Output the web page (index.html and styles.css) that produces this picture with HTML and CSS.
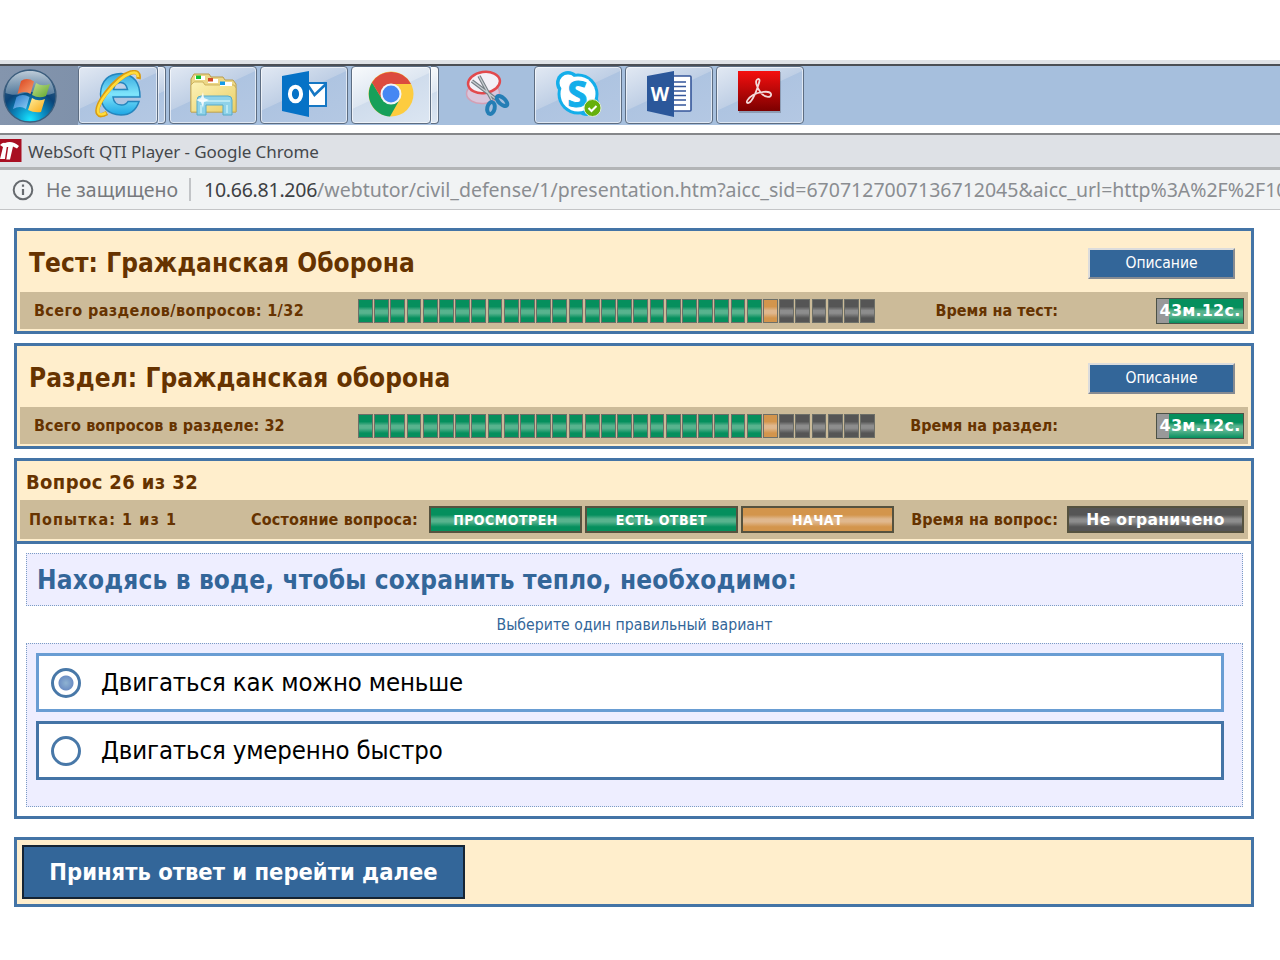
FILE: index.html
```html
<!DOCTYPE html>
<html lang="ru">
<head>
<meta charset="utf-8">
<title>WebSoft QTI Player</title>
<link rel="stylesheet" href="styles.css">
</head>
<body>
<header class="taskbar">
  <div class="start">
    <svg width="56" height="56" viewBox="0 0 56 56">
      <defs>
        <radialGradient id="orb" cx=".5" cy=".95" r=".9"><stop offset="0" stop-color="#18e4ff"/><stop offset=".3" stop-color="#0b8fc4"/><stop offset=".62" stop-color="#0b4478"/><stop offset="1" stop-color="#3c5f80"/></radialGradient>
        <linearGradient id="gloss" x1="0" y1="0" x2="0" y2="1"><stop offset="0" stop-color="#e6eef5" stop-opacity=".75"/><stop offset="1" stop-color="#a4bacb" stop-opacity=".45"/></linearGradient>
        <linearGradient id="fr" x1="0" y1="0" x2="1" y2="1"><stop offset="0" stop-color="#d9421c"/><stop offset="1" stop-color="#f8a070"/></linearGradient>
        <linearGradient id="fg" x1="0" y1="0" x2="1" y2="1"><stop offset="0" stop-color="#c4e08c"/><stop offset="1" stop-color="#5ea62c"/></linearGradient>
        <linearGradient id="fb" x1="0" y1="0" x2="1" y2="1"><stop offset="0" stop-color="#2877c8"/><stop offset="1" stop-color="#8fd0f6"/></linearGradient>
        <linearGradient id="fy" x1="0" y1="0" x2="1" y2="1"><stop offset="0" stop-color="#fff0a0"/><stop offset="1" stop-color="#f9a812"/></linearGradient>
      </defs>
      <circle cx="28" cy="28" r="26" fill="url(#orb)" stroke="#3b5d7d" stroke-width="1.4"/>
      <path d="M3.500 25C5 10 16 3 28 3s23 7 24.500 22c-12 5-18-2-25-1s-14 5-24 1Z" fill="url(#gloss)"/>
      <path d="M19 13q6-4 13 .500L28.500 26q-6-4-13 0Z" fill="url(#fr)"/>
      <path d="M34 15q6 4 14 1l-4 12q-7 3-14-1Z" fill="url(#fg)"/>
      <path d="M14.500 29q6-4 13 0L24 41q-6-4-13 0Z" fill="url(#fb)"/>
      <path d="M30 30q6 4 13 1l-4 13q-7 1-13-2Z" fill="url(#fy)"/>
    </svg>
  </div>
  <div class="task task-narrow">
    <svg width="50" height="48" viewBox="0 0 50 48">
      <defs><linearGradient id="ie" x1="0" y1="0" x2="0" y2="1"><stop offset="0" stop-color="#36a9de"/><stop offset=".5" stop-color="#7fe4fb"/><stop offset="1" stop-color="#1da6e4"/></linearGradient></defs>
      <path d="M47 27H20q1 8 8.500 8 4.500 0 6.500-3.500H46Q41.500 45 28 45 8 44 7.500 24 8.500 4 28 3.500 47 5 47 27ZM20.500 19.500H34.500Q33 12.500 27.500 12.500T20.500 19.500Z" fill="url(#ie)" stroke="#2585bd" stroke-width="1.500"/>
      <path d="M14 43q-7 4-9 .500Q2 38 13 23 26 6 38 2.500q9-2 7.500 6.500" fill="none" stroke="#d99c12" stroke-width="4.500"/>
      <path d="M13 43q-6 3-7.500 0Q3 37 14 23 27 7 38 3q7-2 7 4" fill="none" stroke="#ffdc3c" stroke-width="2.600"/>
    </svg>
  </div>
  <div class="task-stack"></div>
  <div class="task">
    <svg width="52" height="48" viewBox="0 0 52 48">
      <defs><linearGradient id="fold" x1="0" y1="0" x2="1" y2="1"><stop offset="0" stop-color="#fdf3b8"/><stop offset="1" stop-color="#e9cf68"/></linearGradient></defs>
      <path d="M4 42V9l3-5h15l2 3h12l2 3h8l3 4v28Z" fill="#ecd787" stroke="#b99d4d"/>
      <path d="M4 15l3-3h9l2 3h29l2 3v24H4Z" fill="url(#fold)" stroke="#c5a850" stroke-width=".8"/>
      <path d="M8 6h10v4H8ZM21 9h10v4H21ZM33 12h12v4H33Z" fill="#fff"/>
      <path d="M9 5.500h5v3.500H9Z" fill="#11c232"/><path d="M21 8h5v3.500h-5Z" fill="#d44828"/><path d="M33 11.500h5v3.500h-5Z" fill="#149bea"/>
      <path d="M10 45V30q0-4 4-4h27q4 0 4 4v15h-9V35H19v10Z" fill="#8ed2e9" stroke="#56abc9"/>
      <path d="M12 31h31M14 35v8M40 35v8" stroke="#b9e8f4" stroke-width="2"/>
      <path d="M16 22l1 6 5 2-5 2-1 6-2-6-5-2 5-2Z" fill="#fff" opacity=".85"/>
    </svg>
  </div>
  <div class="task">
    <svg width="48" height="48" viewBox="0 0 48 48">
      <path d="M26 13h20v23H26Z" fill="#fff" stroke="#1577c4" stroke-width="2"/>
      <path d="M27 14l7.500 11L46 14" fill="none" stroke="#1577c4" stroke-width="2.600"/>
      <path d="M2 6l27-5v46L2 41Z" fill="#0672c6"/>
      <ellipse cx="15.500" cy="24" rx="5.600" ry="7.300" fill="none" stroke="#fff" stroke-width="4"/>
    </svg>
  </div>
  <div class="task task-narrow task-active">
    <svg width="46" height="46" viewBox="0 0 46 46">
      <circle cx="23" cy="23" r="22.500" fill="#fdcc3f"/>
      <path d="M4 11.500A22.500 22.500 0 0 0 22 45.500L32 28 14 28Z" fill="#16a05a"/>
      <path d="M4 11.500L14 28l9-15H43A22.500 22.500 0 0 0 4 11.500Z" fill="#dc4b3e"/>
      <circle cx="23" cy="23" r="10.500" fill="#f3f5f8"/><circle cx="23" cy="23" r="8.500" fill="#4587f3"/>
    </svg>
  </div>
  <div class="task-stack task-active"></div>
  <div class="pinned">
    <svg width="48" height="48" viewBox="0 0 48 48">
      <ellipse cx="18" cy="23" rx="16.500" ry="10.500" fill="#d9c6dc" stroke="#d3a0b5" stroke-width="1.500" transform="rotate(-4 18 23)"/>
      <ellipse cx="19" cy="12.500" rx="16" ry="10.500" fill="#f3f0f7" stroke="#e2494d" stroke-width="2.500" transform="rotate(-8 19 12.500)"/>
      <path d="M7 11l24 18M14 6l13 24" stroke="#777f86" stroke-width="3.500"/><path d="M7 11l24 18M14 6l13 24" stroke="#c9ced2" stroke-width="1.300"/>
      <ellipse cx="37" cy="31" rx="3.200" ry="6.500" transform="rotate(-48 37 31)" fill="none" stroke="#247eb5" stroke-width="4"/>
      <ellipse cx="26" cy="38" rx="3.700" ry="6" transform="rotate(12 26 38)" fill="none" stroke="#247eb5" stroke-width="4"/>
    </svg>
  </div>
  <div class="task">
    <svg width="48" height="48" viewBox="0 0 48 48">
      <g fill="#14aeea"><circle cx="24" cy="24" r="20.500"/><circle cx="14" cy="13" r="12"/><circle cx="33" cy="34" r="12"/></g>
      <g fill="#fff"><circle cx="24" cy="24" r="17.500"/><circle cx="14" cy="13" r="8.500"/></g>
      <text x="23.500" y="36.500" class="skype-s">S</text>
      <circle cx="38.500" cy="38" r="8.500" fill="#65b00c" stroke="#dcebd4" stroke-width="1"/><path d="M34.500 38l3 3 5-5" stroke="#fff" stroke-width="2" fill="none"/>
    </svg>
  </div>
  <div class="task">
    <svg width="48" height="48" viewBox="0 0 48 48">
      <path d="M26 6h19q1 0 1 1v33q0 1-1 1H26Z" fill="#fff" stroke="#35569a" stroke-width="1.600"/>
      <path d="M28 12h13M28 16.500h13M28 21h13M28 25.500h13M28 30h13M28 35h13" stroke="#35569a" stroke-width="1.600"/>
      <path d="M2 6l27-5v46L2 41Z" fill="#2b579a"/>
      <text x="15" y="31" class="word-w">W</text>
    </svg>
  </div>
  <div class="task">
    <svg width="48" height="48" viewBox="0 0 48 48">
      <defs><linearGradient id="pdf" x1="0" y1="0" x2="0" y2="1"><stop offset="0" stop-color="#f50f0f"/><stop offset="1" stop-color="#7c0000"/></linearGradient></defs>
      <path d="M3 2h42v41H3Z" fill="#5a5f70" opacity=".4"/>
      <path d="M2 1h42v40H2Z" fill="url(#pdf)"/>
      <path d="M22 9c-4 1-1 9 3 14s11 5 10 1-13-2-18 1-8 8-5 8 7-8 9-14 4-10 1-10Z" fill="none" stroke="#f3dada" stroke-width="1.800"/>
    </svg>
  </div>
</header>

<div class="titlebar">
  <svg width="22" height="24" viewBox="0 0 22 24"><path d="M0 0h21.500v23H0Z" fill="#a80f22"/><path d="M0 6q3-3 5-2 7-3 14 3l-2 2.500-4-2-3 13H5L7 9 5 20H0L3 8Z" fill="#fff"/><path d="M7.500 8L5.500 21" stroke="#a80f22" stroke-width="1.500"/></svg>
  <span class="win-title">WebSoft QTI Player - Google Chrome</span>
</div>
<div class="address">
  <svg width="22" height="22" viewBox="0 0 22 22"><circle cx="11" cy="11" r="9.300" fill="none" stroke="#666a6e" stroke-width="2"/><path d="M11 10v6M11 5.500v2.300" stroke="#666a6e" stroke-width="2.200"/></svg>
  <span class="insecure">Не защищено</span>
  <span class="sep"></span>
  <span class="url"><b>10.66.81.206</b>/webtutor/civil_defense/1/presentation.htm?aicc_sid=6707127007136712045&amp;aicc_url=http%3A%2F%2F10</span>
</div>

<main class="player">
  <section class="panel">
    <div class="panel-head"><h1>Тест: Гражданская Оборона</h1><button class="describe">Описание</button></div>
    <div class="strip">
      <span class="label total">Всего разделов/вопросов: 1/32</span>
      <div class="progress"></div>
      <span class="label time-label">Время на тест:</span>
      <span class="timer">43м.12с.</span>
    </div>
  </section>
  <section class="panel">
    <div class="panel-head"><h1>Раздел: Гражданская оборона</h1><button class="describe">Описание</button></div>
    <div class="strip">
      <span class="label total total-section">Всего вопросов в разделе: 32</span>
      <div class="progress"></div>
      <span class="label time-label">Время на раздел:</span>
      <span class="timer">43м.12с.</span>
    </div>
  </section>
  <section class="question">
    <div class="question-head">
      <h2>Вопрос 26 из 32</h2>
      <div class="strip status">
        <span class="label attempt">Попытка: 1 из 1</span>
        <span class="label state-label">Состояние вопроса:</span>
        <span class="badge green">ПРОСМОТРЕН</span>
        <span class="badge green">ЕСТЬ ОТВЕТ</span>
        <span class="badge orange">НАЧАТ</span>
        <span class="label time-label">Время на вопрос:</span>
        <span class="badge gray unlimited">Не ограничено</span>
      </div>
    </div>
    <div class="question-body">
      <div class="prompt">Находясь в воде, чтобы сохранить тепло, необходимо:</div>
      <p class="hint">Выберите один правильный вариант</p>
      <div class="answers">
        <label class="answer chosen"><i class="radio"></i><span>Двигаться как можно меньше</span></label>
        <label class="answer"><i class="radio"></i><span>Двигаться умеренно быстро</span></label>
      </div>
    </div>
  </section>
  <footer class="actions"><button class="accept">Принять ответ и перейти далее</button></footer>
</main>
<script src="player.js"></script>
</body>
</html>
```

FILE: styles.css
```css
* { box-sizing: border-box; }
body { margin: 0; padding-top: 60px; width: 1280px; height: 960px; overflow: hidden; background: #fff; font-family: "DejaVu Sans Condensed", "DejaVu Sans", sans-serif; font-stretch: condensed; }
h1, h2, p { margin: 0; }
span { white-space: nowrap; }
svg { flex: none; }
button { font: inherit; padding: 0; border-radius: 0; }

.taskbar { display: flex; height: 65px; padding-top: 1px; border-top: 4px solid #dfe2e6; background: linear-gradient(#4b4f55 0 2px, #a6bfdd 2px); }
.start { width: 78px; height: 59px; padding: 2px 0 0 2px; margin-top: 1px; background: linear-gradient(90deg, #8495ad, #7f91aa); }
.task, .task-stack { height: 58px; margin-top: 1px; border: 1.500px solid #5d6d82; border-radius: 4px; box-shadow: inset 0 0 0 1px rgba(255,255,255,.6); background: linear-gradient(155deg, #e2e9f3 0%, #bfcfe5 45%, #aec4e1 46%, #b4c8e3 100%); }
.task { display: flex; align-items: center; justify-content: center; width: 88px; margin-right: 3px; padding-bottom: 3px; }
.task-narrow { width: 80px; margin-right: 0; }
.task-stack { width: 8px; margin-right: 3px; border-left: 0; border-radius: 0 4px 4px 0; }
.task-active { background: linear-gradient(155deg, #f8fafc 0%, #dde6f1 45%, #cfdcec 46%, #dce6f2 100%); }
.pinned { width: 92px; padding: 5px 0 0 23px; }
.skype-s { font: bold 36px "Open Sans", sans-serif; text-anchor: middle; fill: #14aeea; stroke: #14aeea; stroke-width: 1px; }
.word-w { font: bold 19px "Open Sans", sans-serif; text-anchor: middle; fill: #fff; }

.titlebar { display: flex; align-items: center; gap: 6px; height: 37px; margin-top: 8px; border-top: 2px solid #85878a; border-bottom: 3px solid #b2b4b6; background: #dee1e6; font: 17px "Noto Sans", sans-serif; color: #45484c; }
.win-title { letter-spacing: -.07px; }
.address { display: flex; align-items: center; height: 40px; padding-left: 12px; border-bottom: 1px solid #c4c5c7; background: #f1f3f4; font: 19.500px "Noto Sans", sans-serif; color: #8a8d91; overflow: hidden; }
.insecure { margin-left: 12px; color: #77797d; width: 131px; }
.sep { flex: none; width: 2px; height: 23px; margin: 0 13px 0 12px; background: #c2c4c7; }
.url b { font-weight: normal; letter-spacing: -.25px; color: #3d4043; }

.player { padding: 18px 26px 0 14px; display: flex; flex-direction: column; }
.panel, .question, .actions { border: 3px solid #4474a6; background: #ffeecc; }
.panel { height: 106px; margin-bottom: 9px; padding: 0 3px; }
.panel-head { display: flex; justify-content: space-between; align-items: center; height: 61px; padding: 3px 13px 0 9px; }
h1 { font-size: 26px; letter-spacing: .07px; color: #663300; }
.describe { width: 147px; height: 31px; border: 2px solid; border-color: #dcdcdc #868b92 #868b92 #dcdcdc; background: #336699; color: #fff; font-size: 15.500px; }
.strip { display: flex; align-items: center; height: 37px; padding-left: 14px; background: #ccbb99; }
.label { font-weight: bold; font-size: 16px; color: #663300; }
.total { width: 324px; letter-spacing: .38px; }
.total-section { letter-spacing: .08px; }
.progress { display: grid; grid-template-columns: repeat(32, 1fr); gap: 1.500px; width: 517px; height: 24px; }
.progress i { border: 1px solid #6d6f68; }
.time-label { width: 183px; text-align: right; }
.timer { display: flex; align-items: center; justify-content: center; width: 88px; height: 26px; margin-left: 98px; border: 1.500px solid #4b5147; color: #fff; font: bold 16px "DejaVu Sans", sans-serif; letter-spacing: .2px; background: linear-gradient(90deg, #999 12px, transparent 12px), linear-gradient(#058f5d 35%, #58b38e 50%, #58b38e 70%, #058f5d); }
.green { background: linear-gradient(#058f5d 30%, #58b38e 48%, #58b38e 60%, #058f5d 82%); }
.orange { background: linear-gradient(#d3954c 30%, #e0b88e 48%, #e0b88e 60%, #d3954c 82%); }
.gray { background: linear-gradient(#555 30%, #8d8d8d 48%, #8d8d8d 60%, #555 82%); }

.question { height: 361px; background: #fff; }
.question-head { height: 83px; padding: 0 3px; border-bottom: 3px solid #4474a6; background: #ffeecc; }
h2 { height: 39px; padding: 9px 0 0 6px; font-size: 20px; line-height: 24px; letter-spacing: .38px; color: #663300; }
.status { height: 39px; padding-left: 9px; }
.attempt { width: 222px; letter-spacing: 1.070px; }
.state-label { width: 178px; letter-spacing: .14px; }
.badge { display: flex; align-items: center; justify-content: center; width: 153px; height: 27px; margin-right: 3px; border: 2px solid #55523f; color: #fff; font-weight: bold; font-size: 14px; letter-spacing: .48px; }
.status .time-label { width: 161px; letter-spacing: .1px; }
.unlimited { width: 177px; margin-left: 9px; font: bold 15.500px "DejaVu Sans", sans-serif; letter-spacing: .4px; }
.question-body { padding: 9px 8px 0 9px; }
.prompt { height: 53px; padding: 0 10px; border: 1px dotted #7b9cc4; background: #eeeeff; font-weight: bold; font-size: 26px; line-height: 52px; letter-spacing: .16px; color: #336699; }
.hint { height: 37px; font-size: 15.700px; line-height: 38px; text-align: center; color: #336699; }
.answers { display: flex; flex-direction: column; gap: 9px; height: 164px; padding: 9px 18px 0 9px; border: 1px dotted #7b9cc4; background: #eeeeff; }
.answer { display: flex; align-items: center; gap: 20px; height: 59px; padding-left: 12px; border: 3px solid #4474a6; background: #fff; font-size: 25.500px; letter-spacing: -.13px; line-height: 30px; color: #000; }
.answer span { padding-bottom: 1px; }
.chosen { border-color: #699dd3; }
.radio { width: 30px; height: 30px; border: 3px solid #4878a8; border-radius: 50%; }
.chosen .radio { background: radial-gradient(circle at 50% 50%, #8fb3d2 0, #6d8fc4 7px, #fff 8px); }
.actions { height: 70px; margin-top: 18px; padding: 5px; }
.accept { width: 443px; height: 54px; border: 2px solid #152434; background: #336699; color: #fff; font-weight: bold; font-size: 23.500px; }
```

FILE: player.js
```js
document.querySelectorAll('.progress').forEach(function (bar) {
  for (var n = 1; n <= 32; n++) {
    var cell = document.createElement('i');
    cell.className = n < 26 ? 'green' : n === 26 ? 'orange' : 'gray';
    bar.appendChild(cell);
  }
});
```
